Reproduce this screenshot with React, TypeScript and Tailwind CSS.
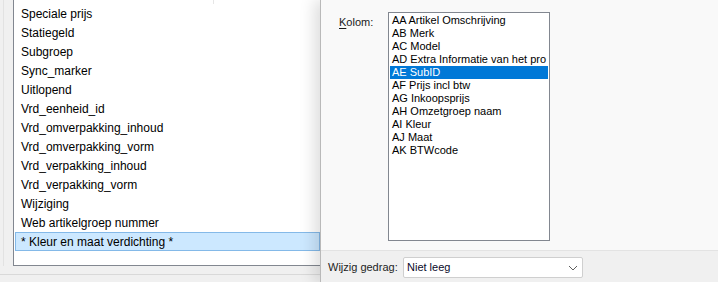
import React from 'react';

const velden = [
  'Speciale prijs',
  'Statiegeld',
  'Subgroep',
  'Sync_marker',
  'Uitlopend',
  'Vrd_eenheid_id',
  'Vrd_omverpakking_inhoud',
  'Vrd_omverpakking_vorm',
  'Vrd_verpakking_inhoud',
  'Vrd_verpakking_vorm',
  'Wijziging',
  'Web artikelgroep nummer',
  '* Kleur en maat verdichting *',
];

const kolommen = [
  'AA Artikel Omschrijving',
  'AB Merk',
  'AC Model',
  'AD Extra Informatie van het pro',
  'AE SubID',
  'AF Prijs incl btw',
  'AG Inkoopsprijs',
  'AH Omzetgroep naam',
  'AI Kleur',
  'AJ Maat',
  'AK BTWcode',
];

function VeldenLijst() {
  return (
    <div className="flex h-full w-[320px] shrink-0 flex-col bg-[#f0f0f0]">
      <div className="flex h-[266px]">
        <div className="w-[13px] shrink-0 pl-[3px]">
          <div className="h-full w-px bg-[#e2e2e2]" />
        </div>
        <div className="flex-1 overflow-hidden border-b border-l border-[#828790] bg-white pl-px">
          <div className="flex h-[4px]">
            <div className="ml-[198px] h-full w-px bg-[#e6e6e6]" />
          </div>
          {velden.map((veld, i) => {
            const selected = i === velden.length - 1;
            return (
              <div
                key={veld}
                className={
                  selected
                    ? 'flex h-[19px] items-center whitespace-nowrap border border-[#84b9e8] bg-[#cce8ff] pl-[5px] text-black'
                    : 'flex h-[19px] items-center whitespace-nowrap border border-transparent pl-[5px] text-black'
                }
              >
                {veld}
              </div>
            );
          })}
        </div>
      </div>
      <div className="flex h-[16px] flex-col">
        <div className="h-[8px]" />
        <div className="h-px bg-[#d9d9d9]" />
      </div>
    </div>
  );
}

function KolomPaneel() {
  return (
    <div className="relative z-10 flex h-full flex-1 flex-col border-l border-[#b9b9b9] shadow-[-6px_0_14px_rgba(0,0,0,0.13)]">
      <div className="flex h-[250px] items-start bg-[#f9f9f9] pl-[18px] pt-[12px] text-[11px]">
        <div className="w-[49px] pt-[2px] text-[#1a1a1a]">
          <span className="underline underline-offset-2">K</span>olom:
        </div>
        <div className="h-[229px] w-[162px] overflow-hidden border border-[#828790] bg-white px-px pt-px">
          {kolommen.map((kolom) => (
            <div
              key={kolom}
              className={
                kolom === 'AE SubID'
                  ? 'flex h-[13px] items-center whitespace-nowrap bg-[#0078d7] pl-[2px] leading-[13px] text-white'
                  : 'flex h-[13px] items-center whitespace-nowrap pl-[2px] leading-[13px] text-black'
              }
            >
              {kolom}
            </div>
          ))}
        </div>
      </div>
      <div className="h-px bg-[#e3e3e3]" />
      <div className="flex flex-1 items-start bg-[#f0f0f0] pl-[7px] pt-[6px] text-[11px]">
        <div className="flex h-[21px] w-[75px] items-center text-[#1e1e1e]">Wijzig gedrag:</div>
        <div className="flex h-[21px] w-[180px] items-center justify-between rounded-[2px] border border-[#cfcfcf] bg-white pl-[3px] pr-[4px]">
          <span className="text-[#0a0a2a]">Niet leeg</span>
          <svg width="10" height="6" viewBox="0 0 10 6" className="mt-px">
            <path d="M1 1 L5 5 L9 1" fill="none" stroke="#5f5f5f" strokeWidth="1" />
          </svg>
        </div>
      </div>
    </div>
  );
}

export default function App() {
  return (
    <div
      className="flex h-[282px] w-[718px] overflow-hidden text-[12px]"
      style={{ fontFamily: '"Liberation Sans", Arial, sans-serif' }}
    >
      <VeldenLijst />
      <KolomPaneel />
    </div>
  );
}
